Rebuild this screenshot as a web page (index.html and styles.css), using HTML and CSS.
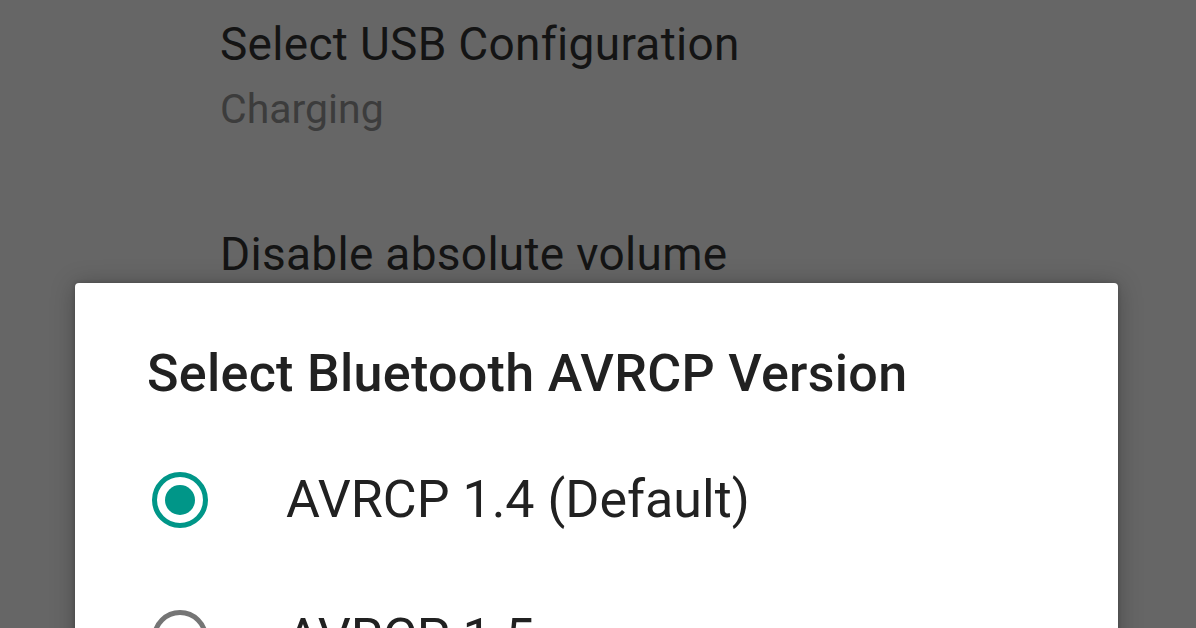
FILE: index.html
```html
<!DOCTYPE html>
<html>
<head>
<meta charset="utf-8">
<link rel="stylesheet" href="styles.css">
</head>
<body>
<div class="screen">
  <div class="prefs">
    <div class="pref">
      <div class="pref-title">Select USB Configuration</div>
      <div class="pref-summary">Charging</div>
    </div>
    <div class="pref pref-second">
      <div class="pref-title">Disable absolute volume</div>
    </div>
  </div>
  <div class="dialog">
    <div class="dialog-title">Select Bluetooth AVRCP Version</div>
    <div class="choices">
      <div class="choice">
        <svg class="radio" viewBox="0 0 60 60" width="60" height="60">
          <circle cx="30" cy="30" r="25.5" fill="none" stroke="#009688" stroke-width="5"/>
          <circle cx="30" cy="30" r="15" fill="#009688"/>
        </svg>
        <span class="choice-label">AVRCP 1.4 (Default)</span>
      </div>
      <div class="choice">
        <svg class="radio" viewBox="0 0 60 60" width="60" height="60">
          <circle cx="30" cy="30" r="25.5" fill="none" stroke="#757575" stroke-width="5"/>
        </svg>
        <span class="choice-label">AVRCP 1.5</span>
      </div>
    </div>
  </div>
</div>
</body>
</html>
```

FILE: styles.css
```css
html, body {
  margin: 0;
  padding: 0;
}
body {
  width: 1196px;
  height: 628px;
  overflow: hidden;
  background: #666666;
  font-family: Roboto, "Noto Sans", sans-serif;
}
.screen {
  position: relative;
  width: 1196px;
  height: 628px;
  overflow: hidden;
}
.prefs {
  padding: 18px 0 0 220px;
  display: flex;
  flex-direction: column;
}
.pref-title {
  font-size: 46px;
  line-height: 52px;
  letter-spacing: 0.3px;
  color: #141414;
}
.pref-summary {
  margin-top: 16px;
  font-size: 41px;
  line-height: 46px;
  color: #3c3c3c;
}
.pref-second {
  margin-top: 96px;
}
.dialog {
  position: absolute;
  left: 75px;
  top: 283px;
  width: 1043px;
  height: 500px;
  background: #ffffff;
  border-radius: 4px;
  box-shadow: 0 2px 24px rgba(0, 0, 0, 0.28), 0 0 4px rgba(0, 0, 0, 0.2);
  padding: 61px 0 0 72px;
  box-sizing: border-box;
}
.dialog-title {
  font-size: 52px;
  font-weight: 500;
  line-height: 60px;
  letter-spacing: 0.3px;
  color: #212121;
}
.choices {
  margin-top: 27px;
  margin-left: 3px;
  display: flex;
  flex-direction: column;
}
.choice {
  height: 138px;
  display: flex;
  align-items: center;
}
.radio {
  flex: none;
}
.choice-label {
  margin-left: 76px;
  font-size: 52px;
  line-height: 60px;
  color: #212121;
}
```
